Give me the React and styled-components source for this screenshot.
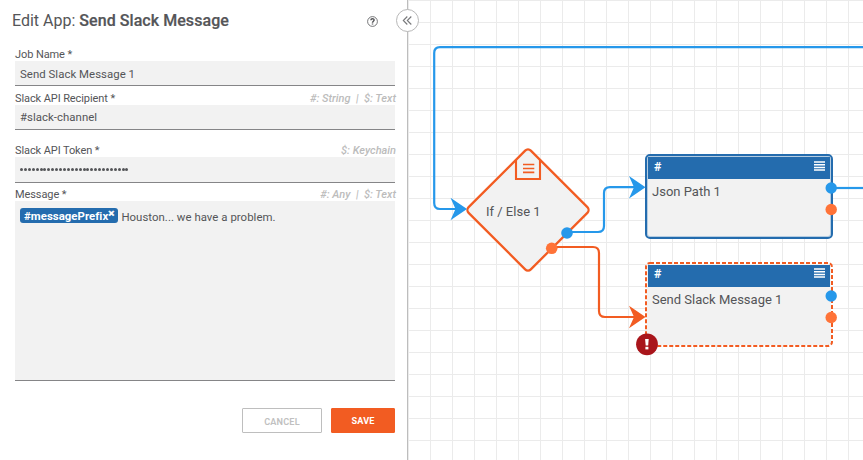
import React from 'react';
import styled, { createGlobalStyle, css } from 'styled-components';

const colors = {
  blue: '#2698ea',
  navy: '#246cae',
  orange: '#f25c22',
  port: '#ff7338',
  ink: '#545558',
  fill: '#f2f2f2',
};

const GlobalStyle = createGlobalStyle`
  * { box-sizing: border-box; }
  body {
    margin: 0;
    background: #fff;
    color: ${colors.ink};
    font-family: Roboto, "Liberation Sans", sans-serif;
    overflow: hidden;
  }
`;

const Layout = styled.div`
  display: grid;
  grid-template-columns: 408px 1fr;
  height: 460px;
`;

const Panel = styled.aside`
  position: relative;
  display: flex;
  flex-direction: column;
  padding: 0 12px 0 15px;
  border-right: 1px solid #bdbdbd;
`;

const PanelHeader = styled.header`
  display: flex;
  align-items: center;
  justify-content: space-between;
  height: 42px;
  margin: 0 17px 0 -3px;
`;

const Title = styled.h1`
  margin: 0;
  font-size: 16px;
  font-weight: 400;
  line-height: 20px;
  white-space: nowrap;
`;

const AppName = styled.span`
  font-weight: 500;
  letter-spacing: 0.06px;
  -webkit-text-stroke: 0.2px ${colors.ink};
`;

const HelpIcon = styled.svg`
  width: 11px;
  height: 11px;
  display: block;
`;

const CollapseButton = styled.button`
  position: absolute;
  top: 9px;
  right: -12px;
  width: 23px;
  height: 23px;
  padding: 0;
  display: grid;
  place-items: center;
  border: 1px solid #b8b8b8;
  border-radius: 50%;
  background: #fff;
  z-index: 2;
`;

const Field = styled.div`
  display: flex;
  flex-direction: column;
  margin-top: ${(p) => p.$gap}px;
`;

const FieldHead = styled.div`
  display: flex;
  justify-content: space-between;
  height: 13px;
  margin-right: -1px;
  font-size: 11px;
  line-height: 13px;
  white-space: pre;
`;

const Label = styled.label`
  letter-spacing: -0.09px;
`;

const Hint = styled.span`
  color: #bcbcbc;
  font-style: italic;
  font-weight: 500;
`;

const Value = styled.div`
  height: ${(p) => p.$height}px;
  padding: ${(p) => p.$top}px 5px 0;
  border-bottom: 1px solid #858587;
  background: ${colors.fill};
  font-size: 11.4px;
  line-height: 14px;
  letter-spacing: 0.04px;
  white-space: nowrap;
`;

const Secret = styled.div`
  display: flex;
  gap: 0.92px;
  padding-top: 5px;
`;

const Dot = styled.i`
  width: 3px;
  height: 3px;
  border-radius: 50%;
  background: ${colors.ink};
`;

const Tag = styled.span`
  display: inline-flex;
  height: 15px;
  margin-top: -2px;
  margin-right: 3px;
  padding: 0 4px;
  border-radius: 3px;
  background: ${colors.navy};
  color: #fff;
  font-weight: 700;
  font-size: 11.4px;
  letter-spacing: 0.04px;
  line-height: 17px;
  vertical-align: top;
`;

const TagClose = styled.span`
  font-size: 11.5px;
  line-height: 10px;
  -webkit-text-stroke: 0.4px #fff;
`;

const Actions = styled.div`
  display: flex;
  justify-content: flex-end;
  gap: 9px;
  margin-top: 27px;
`;

const Button = styled.button`
  width: ${(p) => (p.$primary ? 64 : 80)}px;
  height: 25px;
  padding: ${(p) => (p.$primary ? 0 : '2px 0 0')};
  border: 1px solid ${(p) => (p.$primary ? colors.orange : '#bebebe')};
  border-radius: 1px;
  background: ${(p) => (p.$primary ? colors.orange : '#fff')};
  color: ${(p) => (p.$primary ? '#fff' : '#c0c0c0')};
  font: ${(p) => (p.$primary ? 700 : 600)} 9.1px Roboto, sans-serif;
  letter-spacing: 0.2px;
`;

const Canvas = styled.main`
  position: relative;
  overflow: hidden;
  background-image:
    linear-gradient(to right, #ebebeb 1px, transparent 1px),
    linear-gradient(to bottom, #ebebeb 1px, transparent 1px);
  background-size: 22px 22px;
`;

const Wires = styled.svg`
  position: absolute;
  inset: 0;
  width: 455px;
  height: 460px;
  overflow: visible;
`;

const NodeCard = styled.section`
  position: absolute;
  left: 237px;
  top: ${(p) => p.$top}px;
  width: 188px;
  height: 85px;
  padding-top: 1px;
  border-radius: 5px;
  ${(p) =>
    p.$invalid
      ? css`border: 2px dashed transparent;`
      : css`
          border: 2px solid ${colors.navy};
          box-shadow: inset 0 0 0 1px #b5cde2;
        `}
  background-color: ${colors.fill};
  background-clip: padding-box;
`;

const NodeHeader = styled.div`
  display: flex;
  justify-content: space-between;
  align-items: flex-start;
  height: 22px;
  margin: 0 1px;
  padding: ${(p) => (p.$invalid ? 3 : 4)}px 5px 0 6px;
  background: ${colors.navy};
  color: #fff;
  font-size: 12.5px;
  font-weight: 700;
  line-height: 12px;
`;

const NodeName = styled.div`
  padding: 5px;
  font-size: 13px;
  line-height: 16px;
  white-space: nowrap;
`;

const DiamondName = styled.div`
  position: absolute;
  left: 78px;
  top: 204px;
  font-size: 13px;
  line-height: 16px;
`;

function MenuIcon() {
  return (
    <svg width="12" height="10" viewBox="0 0 12 10">
      <path d="M1 1H12M1 3.7H12M1 6.4H12M1 9.1H12" stroke="#fff" strokeWidth="1.5" />
    </svg>
  );
}

function FormField({ label, hint, gap, height, top, children }) {
  return (
    <Field $gap={gap}>
      <FieldHead>
        <Label>{label} *</Label>
        {hint && <Hint>{hint}</Hint>}
      </FieldHead>
      <Value $height={height} $top={top}>{children}</Value>
    </Field>
  );
}

function Node({ name, top, invalid }) {
  return (
    <NodeCard $top={top} $invalid={invalid}>
      <NodeHeader $invalid={invalid}>
        <span>#</span>
        <MenuIcon />
      </NodeHeader>
      <NodeName>{name}</NodeName>
    </NodeCard>
  );
}

function Arrow({ x, y, color }) {
  return <path d={`M${x} ${y}l-16.5 -11.2 5 11.2 -5 11.2z`} fill={color} />;
}

export default function App() {
  return (
    <>
      <GlobalStyle />
      <Layout>
        <Panel>
          <PanelHeader>
            <Title>Edit App: <AppName>Send Slack Message</AppName></Title>
            <HelpIcon viewBox="0 0 11 11" fill="none" stroke={colors.ink}>
              <circle cx="5.5" cy="5.5" r="4.9" strokeWidth="0.8" />
              <path d="M3.9 4.2C3.9 2.2 7.1 2.2 7.1 4.1C7.1 5.2 5.5 5.3 5.5 6.7M5.5 7.4V8.6" strokeWidth="1.5" />
            </HelpIcon>
          </PanelHeader>
          <CollapseButton aria-label="Collapse panel">
            <svg width="11" height="11" viewBox="0 0 11 11" fill="none" stroke="#77787a" strokeWidth="1.1">
              <path d="M5.3 1.5L1.3 5.5L5.3 9.5M9.3 1.5L5.3 5.5L9.3 9.5" />
            </svg>
          </CollapseButton>
          <FormField label="Job Name" gap={6} height={25} top={6}>Send Slack Message 1</FormField>
          <FormField label="Slack API Recipient" hint="#: String  |  $: Text" gap={6} height={25} top={5}>#slack-channel</FormField>
          <FormField label="Slack API Token" hint="$: Keychain" gap={14} height={26} top={6}>
            <Secret>{Array.from({ length: 28 }, (_, i) => <Dot key={i} />)}</Secret>
          </FormField>
          <FormField label="Message" hint="#: Any  |  $: Text" gap={5} height={180} top={9}>
            <Tag>#messagePrefix<TagClose>×</TagClose></Tag>
            Houston... we have a problem.
          </FormField>
          <Actions>
            <Button>CANCEL</Button>
            <Button $primary>SAVE</Button>
          </Actions>
        </Panel>
        <Canvas>
          <Node name="Json Path 1" top={154} />
          <Node name="Send Slack Message 1" top={262} invalid />
          <Wires viewBox="408 0 455 460" fill="none">
            <rect x="484" y="166" width="88" height="88" rx="4" transform="rotate(45 528 210)" fill={colors.fill} stroke={colors.orange} strokeWidth="2.3" />
            <path d="M516 159V179H540V159" stroke={colors.orange} strokeWidth="2.1" />
            <path d="M523 164.5H534.3M523 168.5H534.3M523 172.3H534.3" stroke={colors.orange} strokeWidth="1.7" />
            <rect x="646" y="263" width="186" height="83" rx="4" stroke={colors.orange} strokeWidth="2" strokeDasharray="4 2" />
            <g stroke={colors.blue} strokeWidth="2.2">
              <path d="M863 47.2H440Q434.2 47.2 434.2 53V203Q434.2 209 440 209H456" />
              <path d="M567 232H598Q604 232 604 226V193Q604 187.2 610 187.2H634" />
              <path d="M832 188H863" />
            </g>
            <path d="M552 247H593Q599 247 599 253V311Q599 317 605 317H634" stroke={colors.orange} strokeWidth="2.2" />
            <Arrow x={467} y={209} color={colors.blue} />
            <Arrow x={645.5} y={187.2} color={colors.blue} />
            <Arrow x={645.5} y={317} color={colors.orange} />
            <g fill={colors.blue}>
              <circle cx="567" cy="233" r="5.8" />
              <circle cx="831.2" cy="188" r="5.7" />
              <circle cx="831.2" cy="296" r="5.7" />
            </g>
            <g fill={colors.port}>
              <circle cx="551.7" cy="248.3" r="5.8" />
              <circle cx="831.2" cy="209.5" r="5.7" />
              <circle cx="831.2" cy="317.5" r="5.7" />
            </g>
            <circle cx="647" cy="344.3" r="10.9" fill="#a9151b" />
            <path d="M645.1 339H648.7L648.2 345.5H645.7Z" fill="#fff" />
            <rect x="645.4" y="346.8" width="3" height="2.6" fill="#fff" />
          </Wires>
          <DiamondName>If / Else 1</DiamondName>
        </Canvas>
      </Layout>
    </>
  );
}
